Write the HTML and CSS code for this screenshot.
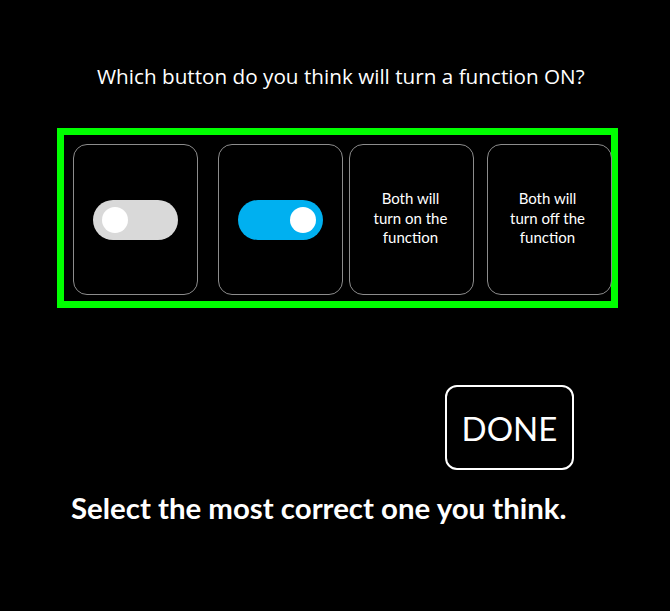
FILE: index.html
```html
<!DOCTYPE html>
<html>
<head>
<meta charset="utf-8">
<link rel="stylesheet" href="styles.css">
</head>
<body>
<div class="page">
  <div class="title">Which button do you think will turn a function ON?</div>
  <div class="frame">
    <div class="card c1">
      <div class="toggle off"><span class="knob"></span></div>
    </div>
    <div class="card c2">
      <div class="toggle on"><span class="knob"></span></div>
    </div>
    <div class="card c3">
      <div class="label">Both will<br>turn on the<br>function</div>
    </div>
    <div class="card c4">
      <div class="label">Both will<br>turn off the<br>function</div>
    </div>
  </div>
  <div class="done">DONE</div>
  <div class="hint">Select the most correct one you think.</div>
</div>
</body>
</html>
```
FILE: styles.css
```css
html, body {
  margin: 0;
  padding: 0;
  background: #000;
}
.page {
  width: 670px;
  height: 611px;
  display: flex;
  flex-direction: column;
  align-items: flex-start;
  color: #fff;
  font-family: "Open Sans", "Noto Sans", sans-serif;
}
.title {
  margin-top: 62px;
  margin-left: 97px;
  font-size: 20.7px;
  line-height: 28px;
  white-space: nowrap;
}
.frame {
  margin-top: 38px;
  margin-left: 57px;
  width: 547px;
  height: 157px;
  border: 7px solid #00ff00;
  display: flex;
  align-items: flex-start;
  padding-top: 9px;
  box-sizing: content-box;
}
.card {
  width: 125px;
  height: 151px;
  box-sizing: border-box;
  border: 1px solid #8c8c8c;
  border-radius: 14px;
  display: flex;
  align-items: center;
  justify-content: center;
  flex-shrink: 0;
}
.c1 { margin-left: 9px; }
.c2 { margin-left: 20px; }
.c3 { margin-left: 6px; }
.c4 { margin-left: 13px; }
.toggle {
  width: 85px;
  height: 40px;
  border-radius: 20px;
  display: flex;
  align-items: center;
  padding: 0 7px;
  box-sizing: border-box;
}
.toggle.off {
  background: #d9d9d9;
  justify-content: flex-start;
  padding-left: 9px;
}
.toggle.on {
  background: #00b0f0;
  justify-content: flex-end;
}
.knob {
  width: 26px;
  height: 26px;
  border-radius: 50%;
  background: #fff;
}
.label {
  font-family: "Lato", "Open Sans", sans-serif;
  font-size: 15px;
  line-height: 19.5px;
  text-align: center;
  margin-bottom: 2px;
}
.c3 .label { margin-right: 2px; }
.c4 .label { margin-right: 4px; }
.done {
  margin-top: 77px;
  margin-left: 445px;
  width: 129px;
  height: 85px;
  box-sizing: border-box;
  border: 2px solid #fff;
  border-radius: 12px;
  display: flex;
  align-items: center;
  justify-content: center;
  font-family: "Lato", "Open Sans", sans-serif;
  font-size: 33px;
}
.hint {
  margin-top: 20px;
  margin-left: 71px;
  font-family: "Lato", "Open Sans", sans-serif;
  font-weight: bold;
  font-size: 29.4px;
  line-height: 36px;
  white-space: nowrap;
}
```
